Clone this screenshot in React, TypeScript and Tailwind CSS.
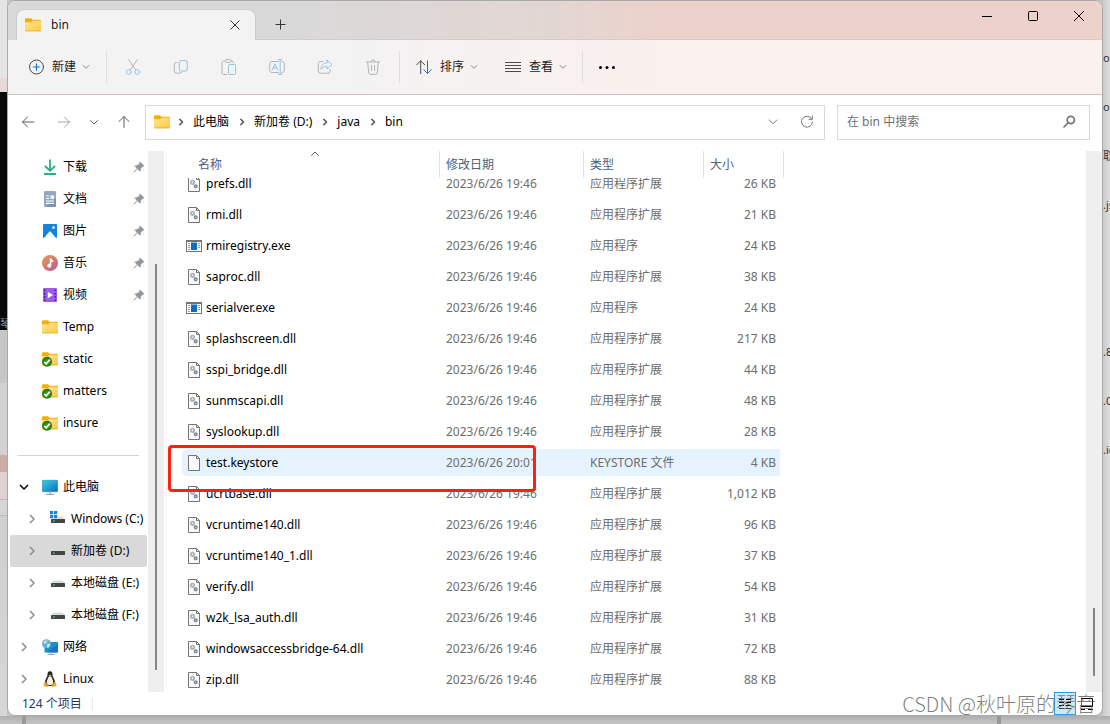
import { useLayoutEffect, useRef } from "react";
import type { ReactNode } from "react";
import { clsx } from "clsx";

type IconProps = { className?: string };

/* ---------- line icons ---------- */

const Line = ({ children, className, size = 16 }: { children: ReactNode; className?: string; size?: number }) => (
  <svg
    width={size}
    height={size}
    viewBox={`0 0 ${size} ${size}`}
    fill="none"
    stroke="currentColor"
    strokeLinecap="round"
    strokeLinejoin="round"
    className={clsx("shrink-0", className)}
    aria-hidden="true"
  >
    {children}
  </svg>
);

const ChevronDown = ({ className }: IconProps) => (
  <Line size={8} className={className}><path d="M1.2 2.5 4 5.3 6.8 2.5" /></Line>
);

const ChevronRight = ({ className }: IconProps) => (
  <Line size={8} className={className}><path d="M2.5 1 5.5 4 2.5 7" strokeWidth="1.6" strokeLinecap="butt" /></Line>
);

const NewIcon = () => (
  <Line className="text-[#4b4b4b]">
    <circle cx="8.5" cy="8" r="7" />
    <path d="M8.5 4.8v6.4M5.3 8h6.4" stroke="#0f78d4" strokeWidth="1.2" />
  </Line>
);

const CutIcon = () => (
  <Line className="text-[#b5b5b5]">
    <path d="M3.7 0.8 10.7 11M12.3 0.8 5.3 11" />
    <circle cx="3.7" cy="13" r="2.4" stroke="#93c3e8" />
    <circle cx="12.3" cy="13" r="2.4" stroke="#93c3e8" />
  </Line>
);

const CopyIcon = () => (
  <Line className="text-[#b5b5b5]">
    <path d="M4 3.5H3.2A2 2 0 0 0 1.3 5.5v6.5a2.2 2.2 0 0 0 2.2 2.2H7a2 2 0 0 0 2-1.5" />
    <rect x="6.3" y="1.5" width="8" height="10.5" rx="2" stroke="#93c3e8" />
  </Line>
);

const PasteIcon = () => (
  <Line className="text-[#b5b5b5]">
    <path d="M4.5 2H2.500A1.500 1.500 0 0 0 1 3.500V14a1.500 1.500 0 0 0 1.500 1.500H6M9.500 2h1.500a1.500 1.500 0 0 1 1.500 1.500V4" />
    <rect x="4.5" y="0.5" width="5.5" height="3" rx="1.3" />
    <rect x="7.5" y="5.5" width="7" height="10" rx="1" stroke="#93c3e8" />
  </Line>
);

const RenameIcon = () => (
  <Line className="text-[#b5b5b5]">
    <path d="M9.5 2.5H3A2.3 2.3 0 0 0 .7 4.8v6.4A2.3 2.3 0 0 0 3 13.5h6.5M13 2.5a2.3 2.3 0 0 1 2.3 2.3v6.4A2.3 2.3 0 0 1 13 13.5" />
    <path d="M3.2 11 6 4.8 8.8 11M4.2 9h3.6M11.2.6v14.8M9.5.6h3.4M9.5 15.4h3.4" stroke="#93c3e8" />
  </Line>
);

const ShareIcon = () => (
  <Line className="text-[#b5b5b5]">
    <path d="M6 2.5H3.500A2.200 2.200 0 0 0 1.300 4.700V12a2.200 2.200 0 0 0 2.200 2.200H11A2.200 2.200 0 0 0 13.200 12v-1.500" />
    <path d="M10 1.2 15 5.6 10 10V7.4C7.2 7.2 5.4 8.2 4 10.3 4.2 6.5 6.2 4 10 3.8Z" stroke="#93c3e8" />
  </Line>
);

const TrashIcon = () => (
  <Line className="text-[#b5b5b5]">
    <path d="M1.2 3h13.6M6 2.8a2 2 0 0 1 4 0M2.7 3l1 10.8A1.8 1.8 0 0 0 5.5 15.4h5a1.8 1.8 0 0 0 1.8-1.6L13.3 3M6.5 6.5v5M9.5 6.5v5" />
  </Line>
);

const SortIcon = () => (
  <Line className="text-[#4b4b4b]">
    <path d="M4.7 14.5V2M.7 5.8 4.7 1.8 8.7 5.8" />
    <path d="M11.5 1.8v12.4M7.8 10.7l3.7 3.7 3.8-3.7" stroke="#0f78d4" />
  </Line>
);

const ViewIcon = () => (
  <Line className="text-[#4b4b4b]">
    <path d="M0 3.5h16M0 6.5h16M0 9.5h16M0 12.5h16" strokeLinecap="butt" />
  </Line>
);

const MoreIcon = () => (
  <svg width="16" height="16" viewBox="0 0 16 16" aria-hidden="true">
    <circle cx="1.5" cy="8.5" r="1.5" />
    <circle cx="8" cy="8.5" r="1.5" />
    <circle cx="14.5" cy="8.5" r="1.5" />
  </svg>
);

/* ---------- filled icons ---------- */

const FolderIcon = ({ synced }: { synced?: boolean }) => (
  <svg width="16" height="16" viewBox="0 0 16 16" className="shrink-0" aria-hidden="true">
    <defs>
      <linearGradient id="folderFront" x1="0" y1="0" x2="1" y2="1">
        <stop offset="0" stopColor="#ffe59a" />
        <stop offset="1" stopColor="#fdc93f" />
      </linearGradient>
      <radialGradient id="syncGreen">
        <stop offset="0" stopColor="#3da51b" />
        <stop offset="1" stopColor="#1d7a10" />
      </radialGradient>
    </defs>
    <path d="M0 2.2Q0 1.2 1 1.2H6L7.6 2.8H15Q16 2.8 16 3.8V8H0Z" fill="#f4ae0c" />
    <path d="M0 5.2H6L7.6 3.7H15.2Q16 3.7 16 4.5V13.2Q16 14 15 14H1Q0 14 0 13.2Z" fill="url(#folderFront)" />
    <path d="M0 13.2Q0 14 1 14H15Q16 14 16 13.2" fill="none" stroke="#e9a820" strokeWidth=".8" />
    {synced && (
      <>
        <circle cx="5" cy="10.8" r="5" fill="url(#syncGreen)" />
        <path d="M2.3 11 4.2 12.9 7.8 8.6" stroke="#fff" strokeWidth="1.7" fill="none" />
      </>
    )}
  </svg>
);

const DownloadsIcon = () => (
  <svg width="16" height="16" viewBox="0 0 16 16" className="shrink-0" fill="none" stroke="#27b08b" strokeWidth="1.8" aria-hidden="true">
    <path d="M8 .5v11M3 7l5 4.8L13 7M2 15h12" />
  </svg>
);

const DocumentsIcon = () => (
  <svg width="16" height="16" viewBox="0 0 16 16" className="shrink-0" aria-hidden="true">
    <rect x="2" y="0" width="12" height="16" rx="1.2" fill="#93a9c2" />
    <path d="M14 7v8q0 1-1 1H3Z" fill="#7c95b2" />
    <path d="M4 5h3M4 7.5h3M4 10h8M4 12.3h8" stroke="#fff" strokeWidth="1.2" />
    <rect x="8.5" y="4.5" width="3.5" height="3.3" fill="#fff" />
  </svg>
);

const PicturesIcon = () => (
  <svg width="16" height="16" viewBox="0 0 16 16" className="shrink-0" aria-hidden="true">
    <rect x="1" y="1" width="14" height="14" rx="1" fill="#1583d6" />
    <path d="M2 15 7.2 8.8Q8 8 8.8 8.8L14 15Z" fill="#f2f8fe" />
    <circle cx="11.5" cy="4.5" r="1.3" fill="#fff" />
  </svg>
);

const MusicIcon = () => (
  <svg width="16" height="16" viewBox="0 0 16 16" className="shrink-0" aria-hidden="true">
    <defs>
      <linearGradient id="music" x1="0" y1="0" x2="1" y2="1">
        <stop offset="0" stopColor="#f09b4c" />
        <stop offset="1" stopColor="#b35a9c" />
      </linearGradient>
    </defs>
    <circle cx="8" cy="8" r="8" fill="url(#music)" />
    <path d="M7.8 3.2h1.3c.2 1.2 1.6 1.5 2.2 2.6v1.5L9.3 6.4v4.2a2 2 0 1 1-1.5-1.9Z" fill="#fff" />
  </svg>
);

const VideosIcon = () => (
  <svg width="16" height="16" viewBox="0 0 16 16" className="shrink-0" aria-hidden="true">
    <rect x="1" y="1" width="14" height="14" rx="1" fill="#9d5cec" />
    <path d="M2.7 2.5v12M13.3 2.5v12" stroke="#502099" strokeWidth="1.6" strokeDasharray="1.6 1.7" />
    <path d="M5.8 4.8 11 8 5.8 11.2Z" fill="#fff" />
  </svg>
);

const ComputerIcon = () => (
  <svg width="16" height="16" viewBox="0 0 16 16" className="shrink-0" aria-hidden="true">
    <defs>
      <linearGradient id="screen" x1="0" y1="0" x2="1" y2="1">
        <stop offset="0" stopColor="#35d3e0" />
        <stop offset="1" stopColor="#1269c4" />
      </linearGradient>
    </defs>
    <rect x=".3" y="1.3" width="15.4" height="11.4" rx=".8" fill="url(#screen)" stroke="#1686b8" strokeWidth=".6" />
    <path d="M8 13v2M4 15.3h8" stroke="#9aa3ad" strokeWidth="1.2" />
  </svg>
);

const DriveIcon = ({ system }: { system?: boolean }) => (
  <svg width="16" height="16" viewBox="0 0 16 16" className="shrink-0" aria-hidden="true">
    <path d="M3.5 5.5h9L15 8.5H1Z" fill="#d8dce0" />
    <rect x="1" y="8" width="14" height="4" rx=".5" fill="#454545" />
    <rect x="3" y="9.3" width="1.5" height="1.5" fill="#2fe04b" />
    {system && (
      <>
        <rect x="0" y="0" width="8" height="7.5" fill="#fff" />
        <path d="M0 0h3.2v3.2H0ZM4 0h3.2v3.2H4ZM0 4h3.2v3.2H0ZM4 4h3.2v3.2H4Z" fill="#1583d6" />
      </>
    )}
  </svg>
);

const NetworkIcon = () => (
  <svg width="16" height="16" viewBox="0 0 16 16" className="shrink-0" aria-hidden="true">
    <rect x="2.5" y="3" width="13.5" height="10.5" rx=".8" fill="#1693cf" />
    <path d="M16 5v7.7q0 .8-.8.8H5Z" fill="#1776c4" />
    <path d="M9 13.5v1.8M5.5 15.5h7" stroke="#9aa3ad" strokeWidth="1.1" />
    <circle cx="4.5" cy="4.8" r="4.5" fill="#6aaed0" />
    <path d="M1.5 3q1.5-2 4-1.8L4.5 4 2 5ZM5 5.5l3-1q.5 2-1.5 4H5Z" fill="#c4e4ee" />
  </svg>
);

const LinuxIcon = () => (
  <svg width="16" height="16" viewBox="0 0 16 16" className="shrink-0" aria-hidden="true">
    <path d="M8 .3C6 .3 5.4 1.7 5.5 4 5.5 6 2.8 8.3 2.7 12.5L5 15h6l2.3-2.5C13.2 8.3 10.5 6 10.5 4 10.6 1.7 10 .3 8 .3Z" fill="#28251f" />
    <path d="M8 5.2c-1 0-1.5.5-1.8 1.5C5.2 8.7 4.6 10 4.8 12L6.5 14h3l1.7-2c.2-2-.4-3.3-1.4-5.3C9.5 5.7 9 5.2 8 5.2Z" fill="#f3f1ea" />
    <path d="M6.5 4.3 8 3.5l1.5.8L8 5.7Z" fill="#e3a51b" />
    <path d="M3.3 10.8 6.7 14.5 5.8 16 1.5 15 2 12.5ZM12.7 10.8 9.3 14.5l.9 1.5 4.3-1L14 12.5Z" fill="#e0a526" />
  </svg>
);

const PinIcon = () => (
  <svg width="12" height="12" viewBox="0 0 12 12" className="shrink-0" aria-hidden="true">
    <path d="M7 .5 11.5 5 10.5 5.6 9.8 5.4 7.9 7.4 7.6 9.8 6.8 10.5 4.5 8 1.3 11.3.5 11.5.7 10.7 3.9 7.5 1.5 5.1 2.3 4.4 4.7 4.1 6.6 2.2 6.3 1.3Z" fill="#8c98a0" />
  </svg>
);

const FileIcon = ({ kind }: { kind: FileKind }) => {
  if (kind === "exe") {
    return (
      <svg width="16" height="16" viewBox="0 0 16 16" className="shrink-0" aria-hidden="true">
        <rect x=".5" y="2.5" width="15" height="11" fill="#fff" stroke="#75756f" />
        <path d="M0 3h16" stroke="#75756f" strokeWidth="2" />
        <rect x="5" y="4.5" width="6" height="7.5" fill="#0b6fc7" />
        <path d="M2 5.5h2M2 7.5h2M2 9.5h2M2 11.5h2M12 5.5h2M12 7.5h2M12 9.5h2" stroke="#8b97a5" />
      </svg>
    );
  }
  return (
    <svg width="16" height="16" viewBox="0 0 16 16" className="shrink-0" aria-hidden="true">
      <path d="M2.5.5h8l3 3v12h-11Z" fill="#fafafa" stroke="#75756f" />
      <path d="M10.5.5v3h3" fill="none" stroke="#75756f" />
      {kind === "dll" && (
        <>
          <circle cx="6.5" cy="6.3" r="1.7" fill="none" stroke="#a9b3ba" strokeWidth="1.8" />
          <circle cx="9.7" cy="10.3" r="1.3" fill="none" stroke="#7c8993" strokeWidth="1.6" />
        </>
      )}
    </svg>
  );
};

/* ---------- data ---------- */

type FileKind = "dll" | "exe" | "keystore";

const kindNames: Record<FileKind, string> = {
  dll: "应用程序扩展",
  exe: "应用程序",
  keystore: "KEYSTORE 文件",
};

const files: { name: string; kind: FileKind; size: string; date?: string; marked?: boolean }[] = [
  { name: "prefs.dll", kind: "dll", size: "26 KB" },
  { name: "rmi.dll", kind: "dll", size: "21 KB" },
  { name: "rmiregistry.exe", kind: "exe", size: "24 KB" },
  { name: "saproc.dll", kind: "dll", size: "38 KB" },
  { name: "serialver.exe", kind: "exe", size: "24 KB" },
  { name: "splashscreen.dll", kind: "dll", size: "217 KB" },
  { name: "sspi_bridge.dll", kind: "dll", size: "44 KB" },
  { name: "sunmscapi.dll", kind: "dll", size: "48 KB" },
  { name: "syslookup.dll", kind: "dll", size: "28 KB" },
  { name: "test.keystore", kind: "keystore", size: "4 KB", date: "2023/6/26 20:01", marked: true },
  { name: "ucrtbase.dll", kind: "dll", size: "1,012 KB" },
  { name: "vcruntime140.dll", kind: "dll", size: "96 KB" },
  { name: "vcruntime140_1.dll", kind: "dll", size: "37 KB" },
  { name: "verify.dll", kind: "dll", size: "54 KB" },
  { name: "w2k_lsa_auth.dll", kind: "dll", size: "31 KB" },
  { name: "windowsaccessbridge-64.dll", kind: "dll", size: "72 KB" },
  { name: "zip.dll", kind: "dll", size: "88 KB" },
];

const quickAccess = [
  { label: "下载", icon: <DownloadsIcon />, pinned: true },
  { label: "文档", icon: <DocumentsIcon />, pinned: true },
  { label: "图片", icon: <PicturesIcon />, pinned: true },
  { label: "音乐", icon: <MusicIcon />, pinned: true },
  { label: "视频", icon: <VideosIcon />, pinned: true },
  { label: "Temp", icon: <FolderIcon /> },
  { label: "static", icon: <FolderIcon synced /> },
  { label: "matters", icon: <FolderIcon synced /> },
  { label: "insure", icon: <FolderIcon synced /> },
];

const tree = [
  { label: "此电脑", icon: <ComputerIcon />, open: true },
  { label: "Windows (C:)", icon: <DriveIcon system />, nested: true },
  { label: "新加卷 (D:)", icon: <DriveIcon />, nested: true, selected: true },
  { label: "本地磁盘 (E:)", icon: <DriveIcon />, nested: true },
  { label: "本地磁盘 (F:)", icon: <DriveIcon />, nested: true },
  { label: "网络", icon: <NetworkIcon /> },
  { label: "Linux", icon: <LinuxIcon /> },
];

const crumbs = ["此电脑", "新加卷 (D:)", "java", "bin"];

const behindText = ["on", "on", "取", ".js", "", "", ".8", ".0", ".io"];

/* ---------- parts ---------- */

const TitleBar = () => (
  <header className="flex h-[39px] shrink-0 items-end bg-linear-to-r from-[#d9d9da] from-25% via-[#e3d6d2] via-50% to-[#ecd2cb] to-60% pl-2">
    <div className="flex h-[31px] w-60 items-center rounded-t-lg border border-b-0 border-[#cdcdcd] bg-[#f3f3f3] pl-2 pr-3">
      <FolderIcon />
      <span className="ml-2.5 flex-1">bin</span>
      <button aria-label="关闭标签页" className="flex size-4 items-center justify-center">
        <Line size={10} className="text-[#333]"><path d="M.8.8 9.2 9.2M9.2.8.8 9.2" /></Line>
      </button>
    </div>
    <div className="flex h-[31px] flex-1 items-center border-b border-[#d3cccb] pl-4">
      <button aria-label="新建标签页" className="flex size-4 items-center justify-center">
        <Line size={11} className="text-[#333]"><path d="M5.5.5v10M.5 5.5h10" strokeLinecap="butt" /></Line>
      </button>
    </div>
    <div className="flex h-full border-b border-[#dfc8c2] pb-[9px]">
      <button aria-label="最小化" className="flex w-[46px] items-center justify-center">
        <Line size={10} className="text-black"><path d="M0 5.5h10" strokeLinecap="butt" /></Line>
      </button>
      <button aria-label="最大化" className="flex w-[46px] items-center justify-center">
        <Line size={10} className="text-black"><rect x=".5" y=".5" width="9" height="9" rx="1" /></Line>
      </button>
      <button aria-label="关闭" className="flex w-[46px] items-center justify-center">
        <Line size={10} className="text-black"><path d="M.3.3 9.7 9.7M9.7.3.3 9.7" /></Line>
      </button>
    </div>
  </header>
);

const ToolButton = ({ label, children }: { label: string; children: ReactNode }) => (
  <button aria-label={label} className="flex h-8 w-12 items-center justify-center">
    {children}
  </button>
);

const MenuButton = ({ label, icon }: { label: string; icon: ReactNode }) => (
  <button className="flex h-8 items-center gap-2">
    {icon}
    <span className="flex items-center gap-1.5">
      {label}
      <ChevronDown className="text-[#8a8a8a]" />
    </span>
  </button>
);

const Divider = () => <div className="h-8 w-px bg-[#dfdddd]" />;

const Toolbar = () => (
  <div
    role="toolbar"
    className="flex h-[55px] shrink-0 items-center border-b border-[#cfc3c2] bg-linear-to-r from-[#f3f3f3] from-30% to-[#faf0ee] to-60% pl-5"
  >
    <MenuButton label="新建" icon={<NewIcon />} />
    <div className="w-4" />
    <Divider />
    <div className="w-0.5" />
    <ToolButton label="剪切"><CutIcon /></ToolButton>
    <ToolButton label="复制"><CopyIcon /></ToolButton>
    <ToolButton label="粘贴"><PasteIcon /></ToolButton>
    <ToolButton label="重命名"><RenameIcon /></ToolButton>
    <ToolButton label="共享"><ShareIcon /></ToolButton>
    <ToolButton label="删除"><TrashIcon /></ToolButton>
    <div className="w-0.5" />
    <Divider />
    <div className="flex gap-[27px] pl-4 pr-[15px]">
      <MenuButton label="排序" icon={<SortIcon />} />
      <MenuButton label="查看" icon={<ViewIcon />} />
    </div>
    <Divider />
    <ToolButton label="更多"><MoreIcon /></ToolButton>
  </div>
);

const AddressRow = () => (
  <div className="flex h-14 shrink-0 items-center gap-3 pb-0.5 pr-3">
    <nav aria-label="导航" className="flex items-center pl-3 text-[#5c5c5c]">
      <button aria-label="后退" className="flex w-5 items-center">
        <Line><path d="M2.5 8h11.5M7.5 3 2.5 8l5 5" /></Line>
      </button>
      <button aria-label="前进" className="ml-4 flex w-5 items-center text-[#a6a6a6]">
        <Line><path d="M2 8h11.5M8.5 3l5 5-5 5" /></Line>
      </button>
      <button aria-label="最近的位置" className="ml-2.5 flex w-5 items-center">
        <Line><path d="M4.5 6.5 8 10l3.5-3.5" /></Line>
      </button>
      <button aria-label="上一级" className="ml-2.5 flex w-5 items-center">
        <Line><path d="M8 13.5V2.5M3 7.5l5-5 5 5" /></Line>
      </button>
    </nav>
    <div className="-ml-[3px] flex h-[35px] flex-1 items-center border border-[#d9d9d9] pl-2">
      <FolderIcon />
      <ol className="-ml-0.5 flex flex-1 items-center">
        {crumbs.map((crumb) => (
          <li key={crumb} className="flex items-center">
            <ChevronRight className="ml-[9px] mr-2 text-[#555]" />
            <a href="#" className="text-black">{crumb}</a>
          </li>
        ))}
      </ol>
      <button aria-label="以前的位置" className="flex w-[34px] justify-center text-[#777]">
        <Line size={10}><path d="M1.2 3 5 6.8 8.8 3" /></Line>
      </button>
      <button aria-label="刷新" className="flex w-[34px] justify-center text-[#777]">
        <Line size={14}>
          <path d="M11.8 4A5.5 5.5 0 1 0 12.5 7M12.3 1v3.3H9" />
        </Line>
      </button>
    </div>
    <form role="search" className="flex h-[35px] w-[253px] items-center border border-[#d9d9d9] pl-[9px] pr-[13px]">
      <input
        type="search"
        aria-label="在 bin 中搜索"
        placeholder="在 bin 中搜索"
        className="min-w-0 flex-1 outline-none placeholder:text-[#6f6f6f]"
      />
      <Line size={14} className="text-[#777]">
        <circle cx="8.8" cy="5" r="3.6" strokeWidth="1.7" />
        <path d="M6 7.8 2 12" strokeWidth="1.7" />
      </Line>
    </form>
  </div>
);

const Sidebar = () => (
  <aside className="flex w-[156px] shrink-0 text-black">
    <div className="w-[140px] overflow-hidden whitespace-nowrap">
      <ul>
        {quickAccess.map((item) => (
          <li key={item.label} className="flex h-8 items-center gap-[5px] pl-[34px] pr-[3px]">
            {item.icon}
            <a href="#" className="flex-1">{item.label}</a>
            {item.pinned && <PinIcon />}
          </li>
        ))}
      </ul>
      <div className="ml-2.5 mr-[9px] flex h-8 items-center">
        <hr className="w-full border-[#d2d2d2]" />
      </div>
      <ul>
        {tree.map((item) => (
          <li
            key={item.label}
            className={clsx(
              "ml-0.5 mr-px flex h-8 items-center rounded-xs",
              item.nested ? "pl-3.5" : "pl-1.5",
              item.selected && "bg-[#d9d9d9]",
            )}
          >
            <button aria-label={item.open ? "折叠" : "展开"} className="mr-2.5 flex w-4 justify-center">
              {item.open ? (
                <Line size={10} className="text-black"><path d="M1 3l4 4 4-4" strokeWidth="1.5" strokeLinecap="butt" /></Line>
              ) : (
                <Line size={10} className="text-[#8a8a8a]"><path d="M3 1l4 4-4 4" strokeWidth="1.5" strokeLinecap="butt" /></Line>
              )}
            </button>
            {item.icon}
            <a href="#" className="ml-[5px]">{item.label}</a>
          </li>
        ))}
      </ul>
    </div>
    <div className="flex w-4 flex-col items-center bg-[#efefef]">
      <div className="mt-auto mb-[22px] h-3/4 w-0.5 bg-[#868686]" />
    </div>
  </aside>
);

const FileList = () => {
  const pane = useRef<HTMLDivElement>(null);

  useLayoutEffect(() => {
    if (pane.current) pane.current.scrollTop = 10;
  }, []);

  const head = "sticky top-0 z-20 h-[27px] border-r border-[#e5e5e5] bg-white text-left font-normal text-[#4c607a]";
  const cell = "h-[31px] border-y-2 border-transparent bg-clip-padding p-0";

  return (
    <main
      ref={pane}
      className="ml-0.5 flex-1 overflow-y-auto border-l border-[#f5f5f5] pl-[15px] [scrollbar-width:none]"
    >
      <table className="w-[602px] table-fixed border-separate border-spacing-0 whitespace-nowrap">
        <colgroup>
          <col className="w-[258px]" />
          <col className="w-36" />
          <col className="w-[120px]" />
          <col className="w-[76px]" />
          <col className="w-1" />
        </colgroup>
        <thead>
          <tr>
            <th className={clsx(head, "pl-4")}>
              名称
              <Line size={10} className="absolute left-32 -top-0.5 text-[#555]"><path d="M1.5 6.5 5 3l3.5 3.5" /></Line>
            </th>
            <th className={clsx(head, "pl-1.5")}>修改日期</th>
            <th className={clsx(head, "pl-1.5")}>类型</th>
            <th colSpan={2} className={clsx(head, "pl-1.5")}>大小</th>
          </tr>
        </thead>
        <tbody>
          {files.map((file) => {
            const tone = file.marked && "bg-[#e5f3ff]";
            return (
              <tr key={file.name} className="text-[#6d6d6d]">
                <td className={clsx(cell, tone, "relative rounded-l-md text-black")}>
                  <span className="flex items-center gap-1 pl-1">
                    <FileIcon kind={file.kind} />
                    {file.name}
                  </span>
                  {file.marked && (
                    <span className="absolute -left-3.5 -top-1 z-10 h-[47px] w-[368px] rounded-sm border-3 border-[#fb2213]" />
                  )}
                </td>
                <td className={clsx(cell, tone, "pl-1.5")}>{file.date ?? "2023/6/26 19:46"}</td>
                <td className={clsx(cell, tone, "pl-1.5")}>{kindNames[file.kind]}</td>
                <td className={clsx(cell, tone, "pr-1 text-right")}>{file.size}</td>
              </tr>
            );
          })}
        </tbody>
      </table>
    </main>
  );
};

const StatusBar = () => (
  <footer className="relative flex h-[23px] shrink-0 items-center pl-3.5 text-[#1f3a5f]">
    <span className="pr-2.5 pt-px">124 个项目</span>
    <div className="h-3 w-px bg-[#e8e8e8]" />
    <div className="ml-auto flex h-full items-center gap-1 pr-2">
      <button aria-label="详细信息" className="flex h-full w-[22px] items-center justify-center border border-[#26a0da] bg-[#cce8f6] text-black">
        <Line size={12}><path d="M0 1.5h5M7 1.5h5M0 4.5h5M7 4.5h5M0 7.5h5M7 7.5h5M0 10.5h5M7 10.5h5" strokeLinecap="butt" /></Line>
      </button>
      <button aria-label="大图标" className="flex w-3.5 justify-center text-black">
        <Line size={12}><rect x=".5" y=".5" width="11" height="8" /><path d="M0 11.5h4M7 11.5h5" strokeLinecap="butt" /></Line>
      </button>
    </div>
    <span className="absolute -bottom-px right-1.5 whitespace-nowrap font-['Noto_Sans_CJK_SC',sans-serif] text-xl leading-6 font-light text-[#555]/75">
      CSDN @秋叶原的琴音
    </span>
  </footer>
);

const App = () => (
  <div className="flex h-screen min-h-[400px] flex-col overflow-hidden bg-[#c4c4c4] font-['Noto_Sans','Noto_Sans_CJK_SC',sans-serif] text-xs text-[#1b1b1b]">
    <div className="flex min-h-0 flex-1">
      {/* slice of the windows lying behind, left */}
      <div className="flex w-[7px] shrink-0 flex-col">
        <div className="h-[78px] bg-[#e4e4e4]" />
        <div className="h-3.5 bg-[#e6d9d7]" />
        <div className="flex h-[238px] items-end overflow-hidden bg-[#0a0a0a] text-[10px] text-[#999]">琴</div>
        <div className="h-[53px] bg-[#c6c6c6]" />
        <div className="h-[72px] bg-[#d2d2d2]" />
        <div className="h-[17px] bg-[#c9ada6]" />
        <div className="h-7 border-b border-[#bbb] bg-[#ddd2d0]" />
        <div className="h-4 border-b border-[#bbb] bg-[#d5d5d5]" />
        <div className="flex-1 bg-linear-to-b from-[#cfcfcf] to-[#d6d6d6]" />
      </div>

      <div className="flex min-w-0 flex-1 flex-col overflow-hidden rounded-lg border border-[#a9a9a9] bg-white">
        <TitleBar />
        <Toolbar />
        <AddressRow />
        <div className="flex min-h-0 flex-1">
          <Sidebar />
          <FileList />
          <div className="flex w-4 flex-col items-center bg-[#efefef]">
            <div className="mt-auto mb-4 h-[68px] w-0.5 bg-[#868686]" />
          </div>
        </div>
        <StatusBar />
      </div>

      {/* slice of the page lying behind, right */}
      <div className="w-[7px] shrink-0 overflow-hidden bg-linear-to-r from-[#cbcbcb] to-[#dedede] pt-[34px] text-[11px] text-[#333]">
        {behindText.map((text, i) => (
          <div key={i} className="flex h-[49px] items-center">{text}</div>
        ))}
      </div>
    </div>
    <div className="flex h-2 shrink-0 bg-linear-to-b from-[#aeaeae] to-[#c6c6c6] pl-[22px]">
      <div className="w-1 bg-[#999]" />
      <div className="ml-auto mr-[109px] w-1 bg-[#999]" />
    </div>
  </div>
);

export default App;
